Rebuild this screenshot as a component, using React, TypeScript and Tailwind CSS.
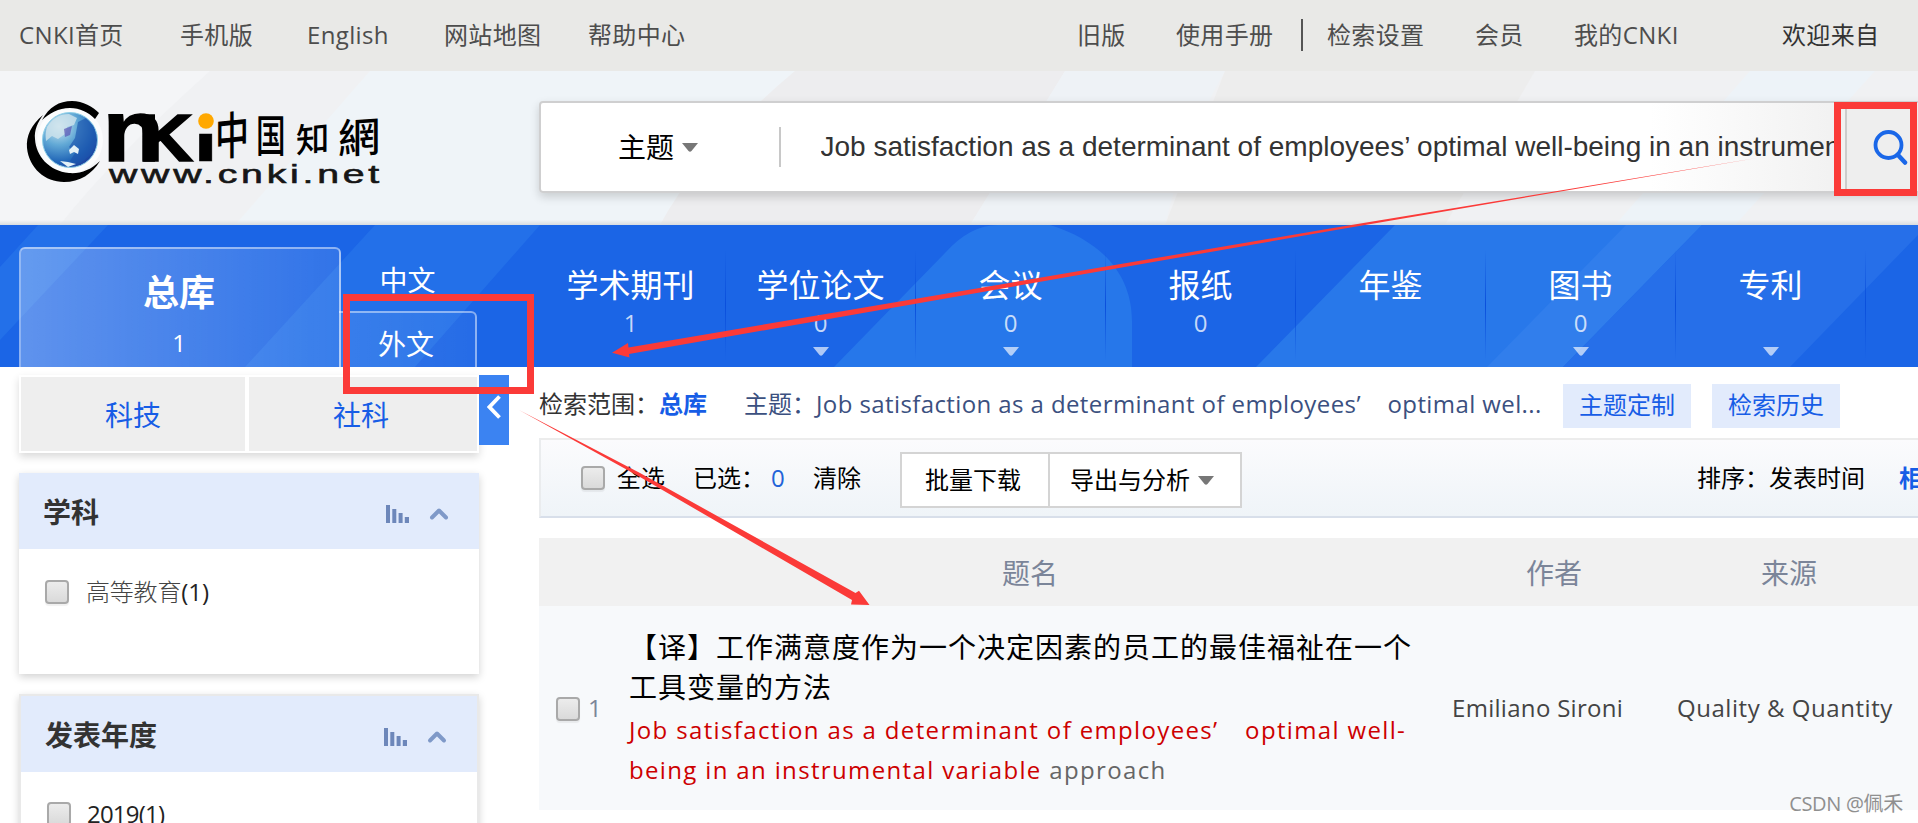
import { ChevronUp } from "lucide-react";

const topLinks = [
  "CNKI首页",
  "手机版",
  "English",
  "网站地图",
  "帮助中心",
  "旧版",
  "使用手册",
  "|",
  "检索设置",
  "会员",
  "我的CNKI",
  "欢迎来自",
];

type Database = {
  name: string;
  count?: number;
  menu?: boolean;
};

const databases: Database[] = [
  { name: "学术期刊", count: 1 },
  { name: "学位论文", count: 0, menu: true },
  { name: "会议", count: 0, menu: true },
  { name: "报纸", count: 0 },
  { name: "年鉴" },
  { name: "图书", count: 0, menu: true },
  { name: "专利", menu: true },
];

function Caret({ className }: { className: string }) {
  return (
    <svg viewBox="0 0 16 9" className={`h-[9px] w-4 shrink-0 ${className}`} fill="currentColor">
      <path d="M0 0h16L9.5 8q-1.500 1.500-3 0z" />
    </svg>
  );
}

function Checkbox() {
  return (
    <span className="block h-6 w-6 shrink-0 rounded-[4px] border-2 border-[#a9a9a9] bg-gradient-to-b from-[#ececec] to-[#dadada] shadow-[0_2px_1px_rgba(0,0,0,0.06)]" />
  );
}

function Logo() {
  return (
    <svg width="364" height="90" viewBox="22 96 364 90" className="block">
      <defs>
        <radialGradient id="globe" cx="0.3" cy="0.25" r="0.85">
          <stop offset="0" stopColor="#d3eaf2" />
          <stop offset="0.4" stopColor="#62a9d6" />
          <stop offset="0.75" stopColor="#2368b8" />
          <stop offset="1" stopColor="#1a3a9a" />
        </radialGradient>
      </defs>
      <circle cx="70" cy="140" r="33" fill="#fbfcfd" />
      <circle cx="70" cy="140" r="27.500" fill="url(#globe)" stroke="#8fd0e8" />
      <path d="M47 127q8-13 22-13l8 4-3 7-7 2-2 7-7 5-6-3-6 5q-1-8 1-14z" fill="#cfe4ec" opacity=".8" />
      <path d="M78 122l8-4 8 9 2 12-4 15-12 9-10-2 5-8-6-6 6-9z" fill="#1c55ad" opacity=".65" />
      <path d="M64 129l8-3-2 9-5 2z" fill="#5a54b4" opacity=".7" />
      <path d="M69 150l5-5 5 4-1 5-4-2-4 2zM60 161l8 1 8 2-8 3z" fill="#e4f1f7" />
      <path d="M42 120C49 107 59 101 72 101c11 0 21 6 27 12l-4 6c-7-7-15-11-25-11-12 0-20 5-28 12z" />
      <path d="M43 115C31 125 26 136 27 148c2 20 18 34 37 34 16 0 28-8 36-21-9 9-20 13-31 12-20-2-33-17-34-34-1-9 3-17 8-24z" />
      <g fontFamily="Liberation Sans, sans-serif" fontWeight="700" stroke="#000">
        <text transform="translate(102.500 161) scale(1.160 1)" fontSize="87" strokeWidth="1.500">
          n<tspan fontSize="66" dx="-22.500">K</tspan>
        </text>
        <text transform="translate(193.500 161) scale(1.750 1)" fontSize="50" strokeWidth=".5">ı</text>
      </g>
      <circle cx="206" cy="121" r="7.800" fill="#ffa800" />
      <g fontFamily="Noto Sans CJK TC, Noto Sans CJK SC, sans-serif" fontWeight="500">
        <text transform="translate(215 156) skewY(-6) scale(.74 1.100)" fontSize="46">中</text>
        <text transform="translate(256 152) scale(.74 1.100)" fontSize="40">国</text>
        <text transform="translate(296 153) skewY(-5) scale(.98 1)" fontSize="34">知</text>
        <text transform="translate(338 154) skewY(-4) scale(1.080 1.050)" fontSize="39">網</text>
      </g>
      <text
        x="109"
        y="183"
        fontSize="26"
        fontFamily="Liberation Sans, sans-serif"
        fill="#161616"
        stroke="#161616"
        strokeWidth=".6"
        textLength="274"
        lengthAdjust="spacingAndGlyphs"
        letterSpacing="2.500"
      >
        www.cnki.net
      </text>
    </svg>
  );
}

function Topbar() {
  return (
    <header className="grid h-[71px] grid-cols-[161px_127px_137px_144px_489px_99px_125px_26px_148px_99px_208px_1fr] items-center bg-[#e9e9e7] pb-0.5 pl-[19px] text-2xl leading-none text-[#4d4d4d]">
      {topLinks.map((link) =>
        link === "|" ? (
          <span key={link} className="h-8 w-0.5 bg-[#555]" />
        ) : (
          <a key={link} className="tracking-[0.35px] last:text-[#333]">
            {link}
          </a>
        ),
      )}
    </header>
  );
}

function SearchHeader() {
  return (
    <section className="relative flex h-[154px] items-start overflow-hidden bg-[#f0f1f3] pl-[22px]">
      <svg className="absolute inset-0 h-full w-full" viewBox="0 0 1918 154" preserveAspectRatio="none">
        <path d="M0 0h210Q110 90 60 154H0z" fill="#f4f5f7" />
        <path d="M370 0h425Q700 80 660 154H235z" fill="#eff4f8" />
        <path d="M795 0h270l-95 154H660Q700 80 795 0z" fill="#ededef" />
        <path d="M1065 0h160q-40 70-60 154H970z" fill="#eef2f6" />
        <path d="M1225 0h310l-90 154h-280z" fill="#ededed" />
        <path d="M1750 0h125l-140 154h-120z" fill="#edf3f8" />
      </svg>
      <div className="relative mt-[25px]">
        <Logo />
      </div>
      <div className="relative ml-[153px] mt-[30px] flex h-[92px] w-[1390px] shrink-0 items-center rounded-l-[4px] border-2 border-[#cfcfd0] bg-gradient-to-r from-white from-80% to-[#f0f0f0] to-95% shadow-[0_4px_10px_rgba(0,0,0,0.16)]">
        <button className="ml-[77px] flex w-[161px] items-center gap-2 text-[28px] leading-none text-black">
          主题
          <Caret className="text-[#777]" />
        </button>
        <div className="h-10 w-[1.500px] bg-[#c8c8c8]" />
        <p className="ml-10 w-[1014px] overflow-hidden whitespace-nowrap font-['Liberation_Sans',sans-serif] text-[28px] leading-9 text-[#333]">
          Job satisfaction as a determinant of employees’ optimal well-being in an instrumental variable approach
        </p>
        <div className="ml-[10px] flex h-full w-20 shrink-0 items-center border-l-2 border-[#ccc] bg-[#eee] pl-[25px]">
          <svg viewBox="0 0 36 36" className="h-9 w-9 shrink-0" fill="none" stroke="#1a67e8" strokeWidth="3.800" strokeLinecap="round">
            <circle cx="16.500" cy="16" r="13" />
            <path d="M26 26l7 7.500" strokeWidth="4.500" />
          </svg>
        </div>
      </div>
      <div className="absolute bottom-0 left-0 h-[5px] w-full bg-gradient-to-b from-transparent to-[#d9dcdf]" />
    </section>
  );
}

function DatabaseNav() {
  return (
    <nav className="relative flex h-[142px] overflow-hidden bg-[#1b65e6] text-white">
      <svg className="absolute inset-0 h-full w-full" viewBox="0 0 1918 142" preserveAspectRatio="none">
        <path d="M38 0h70L0 115V42zM375 0h165L415 142H245z" fill="#2370e9" />
        <path d="M834 142L945 28Q970 0 998 0h52c52 16 82 50 82 96v46z" fill="#2677ea" />
        <path d="M1395 0h307l-139 142h-307z" fill="#2878ea" />
        <path d="M1626 0h76l-139 142h-76z" fill="#317eec" />
        <path d="M1702 0h216v10L1790 142h-227z" fill="#266fe9" />
      </svg>
      <div className="relative ml-[19px] mt-[22px] flex w-[322px] shrink-0 flex-col items-center rounded-t-md border-2 border-b-0 border-white/45 bg-gradient-to-r from-white/30 to-white/10 pr-0.5 pt-6">
        <b className="text-4xl leading-10">总库</b>
        <span className="mt-3 text-2xl leading-9">1</span>
      </div>
      <div className="relative -ml-0.5 w-[197px] shrink-0 text-[28px] leading-none">
        <div className="flex h-[86px] w-[137px] items-center justify-center pt-[24px]">中文</div>
        <div className="flex h-14 w-[138px] items-center justify-center rounded-tr-md border-2 border-b-0 border-l-0 border-white/45 bg-gradient-to-r from-white/10 to-white/5 pr-0.5 pt-2">
          外文
        </div>
      </div>
      {databases.map((db) => (
        <div key={db.name} className="relative flex w-[190px] shrink-0 flex-col items-center pr-px pt-10">
          <span className="text-[32px] leading-10">{db.name}</span>
          <span className="mt-0.5 h-8 text-2xl leading-8 text-white/75">{db.count}</span>
          {db.menu && <Caret className="mt-2 text-white/65" />}
          <i className="absolute right-0 top-6 h-28 w-[1.500px] bg-gradient-to-b from-transparent via-[#0a4fdc] to-transparent" />
        </div>
      ))}
    </nav>
  );
}

function BarsIcon() {
  return (
    <svg viewBox="0 0 23 18" className="h-[18px] w-[23px]" fill="#6d87ba">
      <path d="M0 0h4v18H0zM6.300 4h4v14h-4zM12.600 8h4v10h-4zM18.800 12H23v6h-4.200z" />
    </svg>
  );
}

function FacetHeader({ title }: { title: string }) {
  return (
    <div className="flex h-19 items-center bg-[#e2ebfc] pl-6 pr-[26px]">
      <h3 className="flex-1 pt-0.5 text-[28px] font-bold leading-none text-[#333]">{title}</h3>
      <div className="mt-1.5 flex items-center gap-4">
        <BarsIcon />
        <ChevronUp className="h-[32px] w-7 text-[#7f99c8]" strokeWidth={3.4} />
      </div>
    </div>
  );
}

function Sidebar() {
  return (
    <aside className="w-[539px] shrink-0 pl-[19px] pt-2">
      <div className="flex items-start">
        <div className="flex h-[78px] w-[460px] gap-1 border-2 border-white text-[28px] leading-none text-[#175de6] shadow-[0_4px_8px_rgba(0,0,0,0.15)]">
          <a className="flex flex-1 items-center justify-center bg-[#eee] pt-0.5">科技</a>
          <a className="flex flex-1 items-center justify-center bg-[#eee] pr-1 pt-0.5">社科</a>
        </div>
        <button className="flex h-[70px] w-[30px] items-center justify-center bg-[#3b83f2]">
          <svg viewBox="0 0 14 24" className="mt-[-6px] h-6 w-3.5" fill="none" stroke="#fff" strokeWidth="3.800">
            <path d="M12.500 1.500L2.500 12l10 10.500" />
          </svg>
        </button>
      </div>
      <div className="mt-5 h-[201px] w-[460px] bg-white shadow-[0_3px_8px_rgba(0,0,0,0.18)]">
        <FacetHeader title="学科" />
        <label className="flex items-center pl-[26px] pt-[31px] text-2xl leading-6">
          <Checkbox />
          <span className="ml-[17px] font-light tracking-[-0.2px] text-[#444]">高等教育</span>
          <span className="text-[#222]">(1)</span>
        </label>
      </div>
      <div className="mt-5 h-[201px] w-[460px] border-2 border-[#e9e9e9] bg-white shadow-[0_3px_8px_rgba(0,0,0,0.18)]">
        <FacetHeader title="发表年度" />
        <label className="flex items-center pl-[26px] pt-[30px] text-2xl leading-6 text-[#222]">
          <Checkbox />
          <span className="ml-4 tracking-[-0.8px]">2019(1)</span>
        </label>
      </div>
    </aside>
  );
}

function Results() {
  return (
    <main className="w-[1379px] shrink-0">
      <div className="flex h-[71px] items-center whitespace-nowrap pt-1.5 text-2xl leading-none text-[#3b5080]">
        <span className="w-[120px] shrink-0 pb-1 text-[#333]">检索范围：</span>
        <b className="w-[85px] shrink-0 pb-1 text-[#175de6]">总库</b>
        <span className="w-[72px] shrink-0 pb-1">主题：</span>
        <span className="w-[747px] shrink-0 pb-1 tracking-[0.4px]">
          Job satisfaction as a determinant of employees’<span className="inline-block w-[20px]" />
          {" optimal wel..."}
        </span>
        <a className="mr-[21px] flex h-11 w-32 items-center justify-center bg-[#e2ebfc] pb-0.5 text-[#175de6]">
          主题定制
        </a>
        <a className="flex h-11 w-32 items-center justify-center bg-[#e2ebfc] pb-0.5 text-[#175de6]">检索历史</a>
      </div>
      <div className="flex h-20 items-center overflow-hidden whitespace-nowrap border-b-2 border-l-2 border-t-2 border-b-[#d8dfea] border-l-[#eaecee] border-t-[#ececec] bg-gradient-to-b from-[#fbfbfd] to-[#eff4f8] pl-10 text-2xl leading-none text-black *:shrink-0">
        <Checkbox />
        <span className="ml-3 w-[76px]">全选</span>
        <span className="w-[78px]">已选：</span>
        <span className="w-[42px] text-[#2262d8]">0</span>
        <span className="w-[87px]">清除</span>
        <div className="mt-1 flex h-14 border-2 border-[#d4d4d4] bg-white">
          <button className="w-[146px] shrink-0 pr-1">批量下载</button>
          <button className="flex w-[192px] shrink-0 items-center gap-2 border-l-2 border-[#d4d4d4] pl-5">
            导出与分析
            <Caret className="text-[#777]" />
          </button>
        </div>
        <span className="ml-[455px] w-[72px]">排序：</span>
        <span className="w-[130px]">发表时间</span>
        <b className="text-[#175de6]">相关度</b>
      </div>
      <div className="mt-5 grid h-[68px] grid-cols-[981px_68px_1fr] bg-[#f1f1f1] text-[28px] leading-[70px] text-[#7b8599]">
        <span className="pl-[463px]">题名</span>
        <span className="w-14 whitespace-nowrap pl-1.5">作者</span>
        <span className="pl-[173px]">来源</span>
      </div>
      <div className="flex h-[204px] items-center bg-[#f7f9fb] text-2xl text-[#444]">
        <span className="ml-[17px] mt-0.5">
          <Checkbox />
        </span>
        <span className="ml-2 w-[41px] text-[#7b8599]">1</span>
        <div className="w-[823px] self-start whitespace-nowrap pt-[21px]">
          <p className="text-[28px] leading-10 tracking-[1px] text-black">
            【译】工作满意度作为一个决定因素的员工的最佳福祉在一个
            <br />
            工具变量的方法
          </p>
          <p className="pt-[3px] leading-10 tracking-[1.35px] text-[#cd0000]">
            Job satisfaction as a determinant of employees’<span className="inline-block w-[19px]" />
            {" optimal well-"}
            <br />
            being in an instrumental variable <span className="text-[#666]">approach</span>
          </p>
        </div>
        <span className="w-[225px] whitespace-nowrap tracking-[0.3px]">Emiliano Sironi</span>
        <span className="whitespace-nowrap tracking-[0.55px]">Quality &amp; Quantity</span>
      </div>
    </main>
  );
}

// Red marker boxes and arrows drawn over the page
function Annotations() {
  return (
    <svg className="pointer-events-none absolute inset-0" width="1918" height="823" viewBox="0 0 1918 823">
      <g fill="none" stroke="#fb3a38" strokeWidth="7">
        <rect x="346.500" y="297.500" width="184" height="93" />
        <rect x="1837.500" y="105.500" width="76" height="87" />
      </g>
      <g fill="#fb3a38">
        <path d="M1757 158L1330 228.500 628.500 347.500 628 343 612 352.700 629.500 357.500 629 354 1330 231z" />
        <path d="M519 410L640 473 855.500 593 859 590.700 869.500 605 851 604.500 852 600 640 477z" />
      </g>
    </svg>
  );
}

export default function App() {
  return (
    <div className="relative h-[823px] w-[1918px] overflow-hidden bg-white font-['Open_Sans','Noto_Sans_CJK_SC',sans-serif]">
      <Topbar />
      <SearchHeader />
      <DatabaseNav />
      <div className="flex">
        <Sidebar />
        <Results />
      </div>
      <Annotations />
      <span className="absolute bottom-[7px] right-[15px] text-xl leading-6 tracking-[-0.3px] text-[#8f8f8f]">
        CSDN @佩禾
      </span>
    </div>
  );
}
